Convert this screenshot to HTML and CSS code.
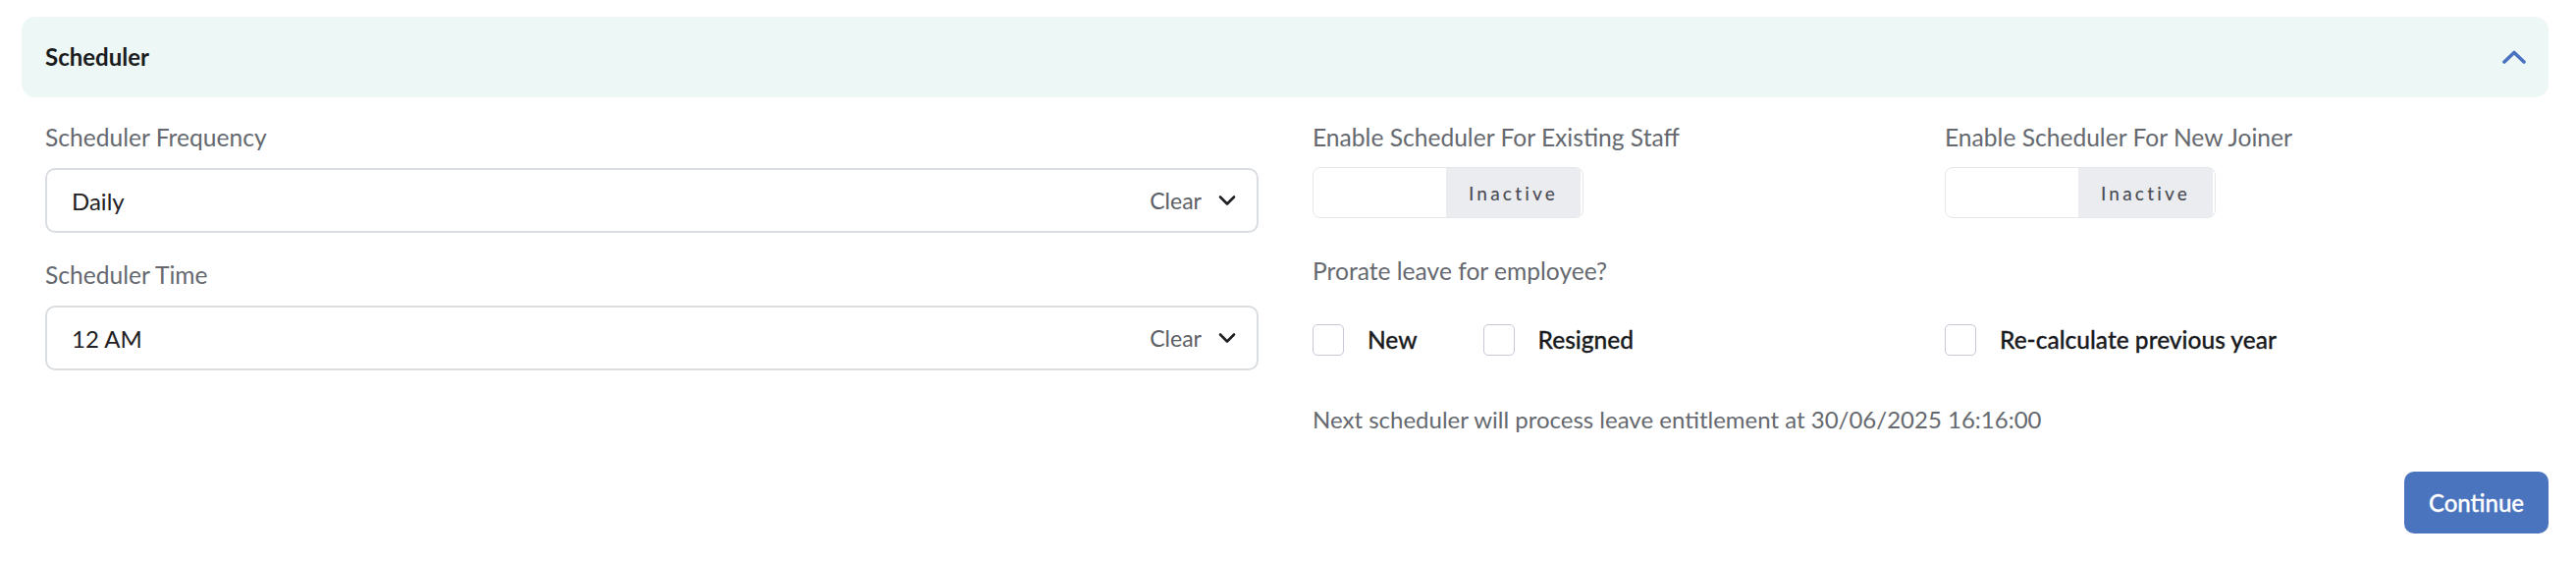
FILE: index.html
```html
<!DOCTYPE html>
<html lang="en">
<head>
<meta charset="utf-8">
<title>Scheduler</title>
<link rel="stylesheet" href="styles.css">
</head>
<body>
<div class="page">
  <div class="panel-header">
    <span class="panel-title">Scheduler</span>
    <svg class="collapse-icon" width="24" height="16" viewBox="0 0 24 16"><polyline points="2,13 12,3.5 22,13" fill="none" stroke="#4a72c0" stroke-width="3.6" stroke-linecap="round" stroke-linejoin="round"/></svg>
  </div>

  <div class="panel-body">
    <div class="form-grid">
      <div class="left-col">
        <div class="field">
          <div class="label">Scheduler Frequency</div>
          <div class="select">
            <span class="select-value">Daily</span>
            <span class="select-actions">
              <span class="clear">Clear</span>
              <svg class="caret" width="18" height="12" viewBox="0 0 18 12"><polyline points="2,2.5 9,9.5 16,2.5" fill="none" stroke="#1f2023" stroke-width="2.6" stroke-linecap="round" stroke-linejoin="round"/></svg>
            </span>
          </div>
        </div>
        <div class="field field-second">
          <div class="label">Scheduler Time</div>
          <div class="select">
            <span class="select-value">12 AM</span>
            <span class="select-actions">
              <span class="clear">Clear</span>
              <svg class="caret" width="18" height="12" viewBox="0 0 18 12"><polyline points="2,2.5 9,9.5 16,2.5" fill="none" stroke="#1f2023" stroke-width="2.6" stroke-linecap="round" stroke-linejoin="round"/></svg>
            </span>
          </div>
        </div>
      </div>

      <div class="right-col">
        <div class="field">
          <div class="label">Enable Scheduler For Existing Staff</div>
          <div class="toggle">
            <span class="toggle-on"></span>
            <span class="toggle-off">Inactive</span>
          </div>
        </div>
        <div class="field">
          <div class="label">Enable Scheduler For New Joiner</div>
          <div class="toggle">
            <span class="toggle-on"></span>
            <span class="toggle-off">Inactive</span>
          </div>
        </div>

        <div class="label span-all prorate">Prorate leave for employee?</div>

        <div class="checks">
          <label class="check"><span class="box"></span><span class="check-text">New</span></label>
          <label class="check"><span class="box"></span><span class="check-text">Resigned</span></label>
        </div>
        <div class="checks">
          <label class="check"><span class="box"></span><span class="check-text">Re-calculate previous year</span></label>
        </div>

        <div class="label span-all next-run">Next scheduler will process leave entitlement at 30/06/2025 16:16:00</div>
      </div>
    </div>

    <div class="actions">
      <button class="btn-primary">Continue</button>
    </div>
  </div>
</div>
</body>
</html>
```

FILE: styles.css
```css
html, body {
  margin: 0;
  padding: 0;
  background: #ffffff;
}

body {
  font-family: Lato, "Liberation Sans", sans-serif;
  color: #1f2023;
}

.page {
  padding: 17px 28px 0 22px;
}

.panel-header {
  height: 82px;
  background: #edf8f6;
  border-radius: 14px;
  display: flex;
  align-items: center;
  justify-content: space-between;
  padding: 0 23px 0 24px;
}

.panel-title {
  font-size: 24px;
  font-weight: 700;
  color: #1b1c1e;
  line-height: 32px;
}

.collapse-icon {
  display: block;
}

.panel-body {
  padding: 25px 0 0 24px;
}

.form-grid {
  display: grid;
  grid-template-columns: 1236px 1fr;
  column-gap: 55px;
}

.label {
  font-size: 24.6px;
  line-height: 32px;
  color: #65696f;
}

.field .label {
  margin-bottom: 15px;
}

.field-second {
  margin-top: 27px;
}

.select {
  height: 66px;
  box-sizing: border-box;
  border: 2px solid #dadde1;
  border-radius: 10px;
  display: flex;
  align-items: center;
  justify-content: space-between;
  padding: 0 21px 0 25px;
}

.select-value {
  font-size: 24px;
  color: #1f2023;
}

.select-actions {
  display: flex;
  align-items: center;
  gap: 17px;
}

.clear {
  font-size: 23px;
  color: #5c6066;
}

.caret {
  display: block;
}

.right-col {
  display: grid;
  grid-template-columns: 644px 1fr;
  align-content: start;
}

.right-col .field .label {
  margin-bottom: 14px;
}

.toggle {
  width: 276px;
  height: 52px;
  box-sizing: border-box;
  border: 1px solid #e6e7ec;
  border-radius: 8px;
  display: flex;
  overflow: hidden;
  background: #ffffff;
}

.toggle-on {
  width: 135px;
}

.toggle-off {
  flex: 1;
  background: #ebecf0;
  margin-right: 2px;
  display: flex;
  align-items: center;
  justify-content: center;
  font-size: 19px;
  font-weight: 500;
  letter-spacing: 3.2px;
  color: #4b4c55;
}

.span-all {
  grid-column: 1 / -1;
}

.prorate {
  margin-top: 38px;
}

.checks {
  display: flex;
  gap: 67px;
  margin-top: 38px;
}

.check {
  display: flex;
  align-items: center;
  gap: 24px;
}

.box {
  width: 32px;
  height: 32px;
  box-sizing: border-box;
  border: 1.5px solid #c6cad8;
  border-radius: 5px;
  background: #ffffff;
}

.check-text {
  font-size: 24.5px;
  font-weight: 500;
  color: #1a1b1e;
  line-height: 32px;
  -webkit-text-stroke: 0.3px #1a1b1e;
}

.next-run {
  margin-top: 49px;
  font-size: 24px;
}

.actions {
  display: flex;
  justify-content: flex-end;
  margin-top: 37px;
}

.btn-primary {
  width: 147px;
  height: 63px;
  border: none;
  border-radius: 10px;
  background: #4a74be;
  color: #ffffff;
  font-family: Lato, "Liberation Sans", sans-serif;
  font-size: 24px;
  font-weight: 500;
  padding: 0;
  -webkit-text-stroke: 0.3px #ffffff;
}
```
